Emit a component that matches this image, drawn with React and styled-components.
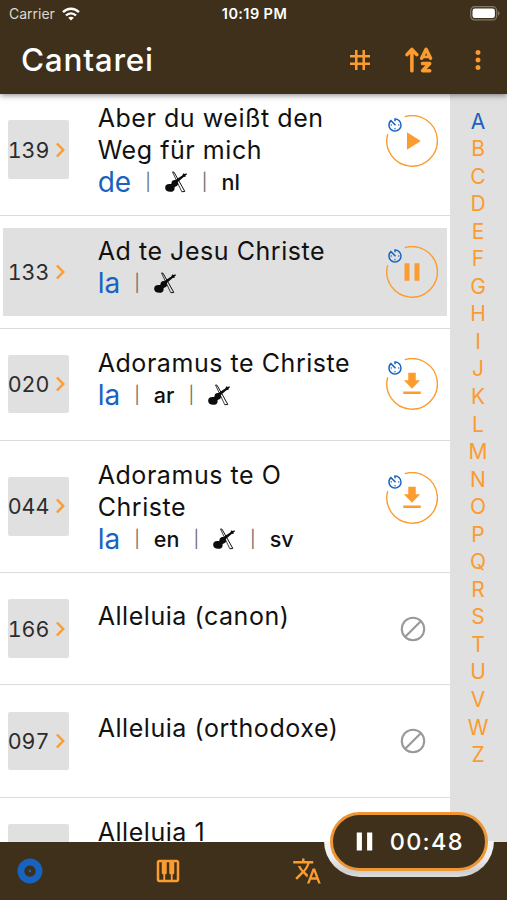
import React from "react";
import styled, { createGlobalStyle } from "styled-components";
import {
    MdAlbum,
    MdAvTimer,
    MdMoreVert,
    MdPause,
    MdPiano,
    MdPlayArrow,
    MdTag,
    MdTranslate,
} from "react-icons/md";
import { FaArrowUpAZ } from "react-icons/fa6";

const brown = "#3e301a";
const orange = "#fb9b30";
const blue = "#1763bf";
const grey = "#e0e0e0";

const GlobalStyle = createGlobalStyle`
    * {
        box-sizing: border-box;
    }

    body {
        margin: 0;
        background: #fff;
        font-family: Inter, "Liberation Sans", sans-serif;
    }

    svg {
        display: block;
        flex: none;
    }
`;

const Screen = styled.div`
    position: relative;
    display: flex;
    flex-direction: column;
    width: 507px;
    height: 900px;
    overflow: hidden;
    background: #fff;
`;

const Header = styled.header`
    position: relative;
    z-index: 1;
    flex: none;
    height: 94px;
    background: ${brown};
    box-shadow: 0 1px 6px rgba(0, 0, 0, 0.5);
`;

const StatusBar = styled.div`
    display: grid;
    grid-template-columns: 1fr auto 1fr;
    align-items: center;
    height: 27px;
    padding: 0 7px 0 9px;
    font-size: 14px;
    color: #fff;
`;

const Carrier = styled.div`
    display: flex;
    align-items: center;
    gap: 7px;
    color: #ddd8cd;
    letter-spacing: 0;
`;

const Clock = styled.div`
    font-weight: 600;
    font-size: 14.5px;
    letter-spacing: 0.4px;
`;

const BatteryWrap = styled.div`
    display: flex;
    justify-content: flex-end;
`;

const TitleBar = styled.div`
    display: flex;
    align-items: center;
    height: 65px;
    padding: 0 14px 0 21px;
    color: ${orange};
`;

const AppTitle = styled.h1`
    margin: 0;
    flex: 1;
    font-size: 31.5px;
    font-weight: 500;
    letter-spacing: 0.75px;
    color: #fff;
`;

const HeaderIcons = styled.div`
    display: flex;
    align-items: center;
    gap: 28px;
`;

const Body = styled.main`
    flex: 1;
    display: flex;
    min-height: 0;
`;

const List = styled.div`
    width: 450px;
    margin-top: -10px;
    overflow: hidden;
`;

const Row = styled.div`
    height: ${(p) => (p.$tall ? 132.2 : 112.35)}px;
    padding: 12px 3px 12px;
    border-bottom: 1px solid #dcdcdc;
`;

const RowInner = styled.div`
    display: flex;
    height: 100%;
    background: ${(p) => (p.$active ? grey : "transparent")};
`;

const NumberBox = styled.div`
    align-self: center;
    display: flex;
    align-items: center;
    justify-content: flex-end;
    flex: none;
    width: 61px;
    height: 58.5px;
    margin-left: 5px;
    padding-right: 4.5px;
    gap: 5px;
    border-radius: 2px;
    background: ${grey};
    color: #2c2c2c;
    font-size: 21.5px;
    font-variant-numeric: tabular-nums;
    letter-spacing: 0;
`;

const SongInfo = styled.div`
    flex: 1;
    margin-left: 28.7px;
    padding-top: ${(p) => p.$top}px;
    white-space: nowrap;
`;

const TitleLine = styled.div`
    height: 32px;
    line-height: 32px;
    font-size: 25px;
    letter-spacing: 0.55px;
    color: #111;
`;

const Languages = styled.div`
    display: flex;
    align-items: center;
    gap: 14px;
    height: 32px;
    line-height: 32px;
`;

const Lang = styled.span`
    color: ${(p) => (p.$main ? blue : "#111")};
    font-size: ${(p) => (p.$main ? 28 : 21.5)}px;
    font-weight: ${(p) => (p.$main ? 400 : 500)};
    letter-spacing: 0;
`;

const Separator = styled.span`
    color: #6f6f6f;
    font-size: 17px;
`;

const Action = styled.div`
    flex: none;
    width: 61.3px;
    padding-top: ${(p) => p.$top}px;
    color: ${orange};
`;

const RingButton = styled.div`
    position: relative;
    display: grid;
    place-items: center;
    width: 52px;
    height: 52px;

    > svg {
        grid-area: 1 / 1;
    }
`;

const TimerBadge = styled.span`
    position: absolute;
    top: 0.5px;
    left: 0.5px;
    color: ${blue};
`;

const Blocked = styled.div`
    padding: 2px 0 0 14px;
`;

const LetterIndex = styled.nav`
    flex: 1;
    display: flex;
    flex-direction: column;
    align-items: center;
    padding: 13.5px 1px 0 0;
    background: ${grey};
`;

const Letter = styled.span`
    height: 27.56px;
    line-height: 27.56px;
    font-size: 21px;
    color: ${(p) => (p.$active ? blue : orange)};
`;

const BottomBar = styled.footer`
    display: flex;
    flex: none;
    align-items: center;
    gap: 108.3px;
    height: 58.5px;
    padding-left: 15px;
    background: ${brown};
    color: ${orange};
`;

const Tab = styled.div`
    color: ${(p) => (p.$active ? blue : orange)};
`;

/* cut-out in the bottom bar around the floating player */
const Notch = styled.div`
    position: absolute;
    left: 324px;
    top: 841px;
    width: 170px;
    height: 36px;
    border-radius: 0 0 36px 36px;
    background: linear-gradient(#f4f4f4, #eee 45%, #cfcfcf 85%, #dedede);
`;

const Player = styled.div`
    position: absolute;
    left: 330px;
    top: 812px;
    z-index: 2;
    display: flex;
    align-items: center;
    justify-content: center;
    gap: 9.5px;
    width: 158px;
    height: 59px;
    padding-right: 5px;
    border: 3px solid #ed9633;
    border-radius: 30px;
    background: ${brown};
    color: #fff;
    font-size: 23.5px;
    font-weight: 500;
    letter-spacing: 1.3px;
`;

function Wifi() {
    return (
        <svg width="18" height="14" viewBox="0 0 18 14" fill="none" stroke="#fff" strokeWidth="2.4">
            <path d="M1 5.2C5.5 0.6 12.5 0.6 17 5.2" />
            <path d="M4 8.5C6.8 5.6 11.2 5.6 14 8.5" />
            <path d="M9 13.6 6.2 10.8C7.8 9.4 10.2 9.4 11.8 10.8Z" fill="#fff" stroke="none" />
        </svg>
    );
}

function Battery() {
    return (
        <svg width="30" height="15" viewBox="0 0 30 15">
            <rect x="0.7" y="0.7" width="26" height="13.2" rx="4" fill="none" stroke="#827a69" strokeWidth="1.2" />
            <rect x="2.5" y="2.5" width="22.4" height="9.6" rx="2.4" fill="#fff" />
            <path d="M28 5v4.6c2-.8 2-3.8 0-4.6z" fill="#827a69" />
        </svg>
    );
}

function Chevron() {
    return (
        <svg width="10" height="16" viewBox="0 0 10 16" fill="none" stroke={orange} strokeWidth="2.5">
            <path d="M1.9 1.5 8.2 8 1.9 14.5" />
        </svg>
    );
}

function Violin() {
    return (
        <svg width="23" height="22" viewBox="0.8 0 23 22">
            <path d="M8.3 1 9.8 1.2 20.6 20.4 17.6 20.8" fill="none" stroke="#111" strokeWidth="1" />
            <path d="M8.3 1 17.6 20.8" stroke="#111" strokeWidth="0.8" />
            <path
                d="M1 16.2c.2-2.3 2.3-3.5 4.7-3.2 1.3.1 1.7-.6 1.7-1.6.2-1.8 2-2.7 3.8-2.3L18 4.4l1.3-2.1 1.3.8 1.7-.8.4 1.1-1.4 1.2.2 1.2-2 .1-6.1 5.3c1 1.8.2 3.8-1.8 4.2-1.2.3-1.3.8-1.2 1.8.1 2.2-1.6 3.6-4.5 3.6-3.2 0-5.2-1.7-4.9-4.6z"
                fill="#0c0c0c"
            />
        </svg>
    );
}

function Ring() {
    return (
        <svg width="52" height="52" viewBox="0 0 52 52" fill="none" stroke={orange} strokeWidth="1.4">
            <path d="M18.7 1.7A25.3 25.3 0 1 1 1.7 19.2" />
        </svg>
    );
}

function DownloadIcon() {
    return (
        <svg width="30" height="30" viewBox="0 0 24 24" fill="currentColor">
            <path d="M18.5 9H15V3H9v6H5.5l6.5 6.8zM5 18v2h14v-2z" />
        </svg>
    );
}

function NoAudioIcon() {
    return (
        <svg width="26" height="26" viewBox="0 0 26 26" fill="none" stroke="#999" strokeWidth="2.1">
            <circle cx="13" cy="13" r="11.2" />
            <path d="M5.2 20.8 20.8 5.2" />
        </svg>
    );
}

const actionIcons = {
    play: <MdPlayArrow size={30} />,
    pause: <MdPause size={30} />,
    download: <DownloadIcon />,
};

const songs = [
    { number: "139", title: ["Aber du weißt den", "Weg für mich"], langs: ["de", "violin", "nl"], action: "play", top: 6.3, actionTop: 19.3 },
    { number: "133", title: ["Ad te Jesu Christe"], langs: ["la", "violin"], action: "pause", top: 7, actionTop: 18 },
    { number: "020", title: ["Adoramus te Christe"], langs: ["la", "ar", "violin"], action: "download", top: 6.7, actionTop: 17.7 },
    { number: "044", title: ["Adoramus te O", "Christe"], langs: ["la", "en", "violin", "sv"], action: "download", top: 6.3, actionTop: 19.5 },
    { number: "166", title: ["Alleluia (canon)"], langs: [], top: 14.7, actionTop: 29 },
    { number: "097", title: ["Alleluia (orthodoxe)"], langs: [], top: 14.7, actionTop: 29 },
    { number: "", title: ["Alleluia 1"], langs: [], top: 6.5, hideAction: true },
];

const playing = "133";

const letters = "ABCDEFGHIJKLMNOPQRSTUVWZ".split("");

function SongAction({ song }) {
    if (song.hideAction) return null;
    if (!song.action) {
        return (
            <Blocked>
                <NoAudioIcon />
            </Blocked>
        );
    }
    return (
        <RingButton>
            <Ring />
            {actionIcons[song.action]}
            <TimerBadge>
                <MdAvTimer size={18} />
            </TimerBadge>
        </RingButton>
    );
}

function Song({ song }) {
    return (
        <Row $tall={song.title.length > 1}>
            <RowInner $active={song.number === playing}>
                <NumberBox>
                    {song.number}
                    {song.number && <Chevron />}
                </NumberBox>
                <SongInfo $top={song.top}>
                    {song.title.map((line) => (
                        <TitleLine key={line}>{line}</TitleLine>
                    ))}
                    {song.langs.length > 0 && (
                        <Languages>
                            {song.langs.map((lang, i) => (
                                <React.Fragment key={lang}>
                                    {i > 0 && <Separator>|</Separator>}
                                    {lang === "violin" ? <Violin /> : <Lang $main={i === 0}>{lang}</Lang>}
                                </React.Fragment>
                            ))}
                        </Languages>
                    )}
                </SongInfo>
                <Action $top={song.actionTop}>
                    <SongAction song={song} />
                </Action>
            </RowInner>
        </Row>
    );
}

function App() {
    return (
        <Screen>
            <GlobalStyle />
            <Header>
                <StatusBar>
                    <Carrier>
                        Carrier
                        <Wifi />
                    </Carrier>
                    <Clock>10:19 PM</Clock>
                    <BatteryWrap>
                        <Battery />
                    </BatteryWrap>
                </StatusBar>
                <TitleBar>
                    <AppTitle>Cantarei</AppTitle>
                    <HeaderIcons>
                        <MdTag size={30} />
                        <FaArrowUpAZ size={32} />
                        <MdMoreVert size={30} />
                    </HeaderIcons>
                </TitleBar>
            </Header>
            <Body>
                <List>
                    {songs.map((song) => (
                        <Song key={song.title[0]} song={song} />
                    ))}
                </List>
                <LetterIndex>
                    {letters.map((letter) => (
                        <Letter key={letter} $active={letter === "A"}>
                            {letter}
                        </Letter>
                    ))}
                </LetterIndex>
            </Body>
            <BottomBar>
                <Tab $active>
                    <MdAlbum size={30} />
                </Tab>
                <Tab>
                    <MdPiano size={30} />
                </Tab>
                <Tab>
                    <MdTranslate size={30} />
                </Tab>
            </BottomBar>
            <Notch />
            <Player>
                <MdPause size={31} />
                00:48
            </Player>
        </Screen>
    );
}

export default App;
